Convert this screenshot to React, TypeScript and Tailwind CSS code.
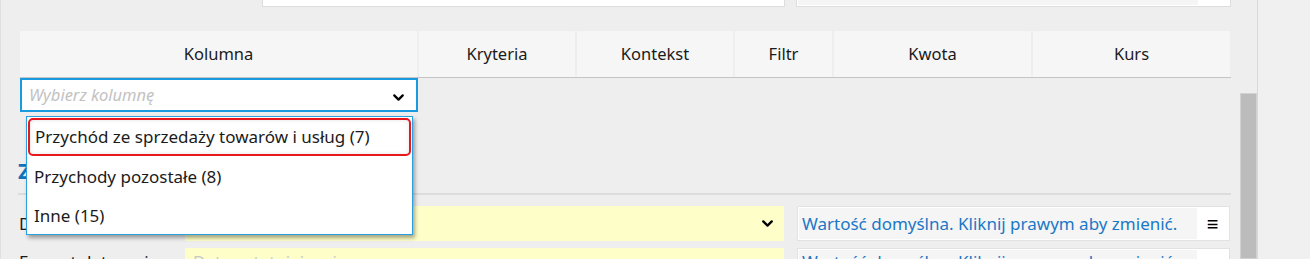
import { ChevronDown } from "lucide-react";

const columns = [
  { label: "Kolumna", w: "w-[397px]" },
  { label: "Kryteria", w: "w-[156px]" },
  { label: "Kontekst", w: "w-[156px]" },
  { label: "Filtr", w: "w-[97px]" },
  { label: "Kwota", w: "w-[197px]" },
  { label: "Kurs", w: "w-[197px]" },
];

const options = [
  "Przychód ze sprzedaży towarów i usług (7)",
  "Przychody pozostałe (8)",
  "Inne (15)",
];

function DefaultBox({ text, top }: { text: string; top?: boolean }) {
  return (
    <div className="flex h-[35px] w-[433px] border border-[#e2e2e2] bg-white p-[1px]">
      <div
        className={
          top
            ? "flex flex-1 items-start bg-[#f5f5f5] pl-[3px] pt-[1px] text-[17px] leading-[22px] text-[#1a78c6]"
            : "flex flex-1 items-center bg-[#f5f5f5] pl-[3px] text-[17px] text-[#1a78c6]"
        }
      >
        {text}
      </div>
      <div className="flex w-[31px] items-center justify-center text-[20px] font-bold leading-none text-black">≡</div>
    </div>
  );
}

export default function App() {
  return (
    <div
      className="flex h-[259px] w-[1310px] overflow-hidden bg-[#eeeeee] text-[#1b1b1b]"
      style={{ fontFamily: '"Noto Sans", "Open Sans", sans-serif' }}
    >
      {/* main panel */}
      <div className="relative w-[1237px] border-l border-[#e0e0e0]">
        {/* previous row, scrolled mostly out of view */}
        <div className="flex h-[7px] items-end">
          <div className="ml-[261px] h-[20px] w-[523px] border border-[#dedede] bg-white" />
          <div className="ml-[11px] flex h-[20px] w-[435px] border border-[#dedede] bg-white p-[1px]">
            <div className="flex-1 bg-[#f5f5f5]" />
            <div className="w-[31px]" />
          </div>
        </div>

        {/* header */}
        <div className="ml-[19px] mt-[24px] flex h-[47px] w-[1211px] gap-[2px] border-b border-[#c4c4c4]">
          {columns.map((c) => (
            <div
              key={c.label}
              className={`${c.w} flex items-center justify-center bg-[#f6f6f6] text-[16.5px] text-[#1b1b1b]`}
            >
              {c.label}
            </div>
          ))}
        </div>

        {/* column select */}
        <div className="ml-[19px] flex h-[34px] w-[398px] items-center justify-between border-2 border-[#1a9be0] bg-white pl-[7px] pr-[9px]">
          <span className="text-[16.5px] italic text-[#c2c2c2]">Wybierz kolumnę</span>
          <ChevronDown size={17} strokeWidth={3.2} className="mt-[4px] text-black" />
        </div>

        {/* section behind the dropdown */}
        <div className="ml-[17px] mt-[47px] text-[22px] font-bold leading-none text-[#1174b8]">Zakres</div>
        <div className="ml-[17px] mt-[12px] w-[1213px] border-t-2 border-[#dcdcdc]" />

        <div className="ml-[18px] mt-[11px] flex flex-col gap-[7px]">
          <div className="flex items-center">
            <span className="w-[166px] text-[17px]">Data przychodu</span>
            <div className="flex h-[35px] w-[599px] items-center justify-end bg-[#fefec8] pr-[8px]">
              <ChevronDown size={17} strokeWidth={3.2} className="text-black" />
            </div>
            <div className="ml-[13px]">
              <DefaultBox text="Wartość domyślna. Kliknij prawym aby zmienić." />
            </div>
          </div>
          <div className="flex items-start">
            <span className="w-[166px] pt-[3px] text-[17px] leading-[22px]">Format daty wpisu</span>
            <div className="flex h-[35px] w-[599px] items-start bg-[#fefec8] pl-[8px] pt-[3px] text-[17px] leading-[22px] text-[#c8c8c8]">
              Data ostatniej zmiany
            </div>
            <div className="ml-[13px]">
              <DefaultBox top text="Wartość domyślna. Kliknij prawym aby zmienić." />
            </div>
          </div>
        </div>

        {/* open dropdown list */}
        <div className="absolute left-[25px] top-[116px] w-[387px] border border-[#2aa0e0] bg-white shadow-[2px_3px_4px_rgba(0,0,0,0.35)]">
          {options.map((o, i) => (
            <div
              key={o}
              className={
                i === 0
                  ? "mx-[1px] mt-[1px] flex h-[38px] items-center rounded-[5px] border-2 border-[#e8171c] pl-[5px] text-[17px] shadow-[inset_0_0_4px_rgba(0,0,0,0.12)]"
                  : "flex h-[39px] items-center pl-[7px] pt-[2px] text-[17px]"
              }
            >
              {o}
            </div>
          ))}
        </div>
      </div>

      {/* scrollbar */}
      <div className="flex w-[20px] flex-col pl-[3px] pt-[93px]">
        <div className="flex-1 w-[17px] border border-[#d2d2d2] bg-[#bcbcbc]" />
      </div>

      {/* outer area */}
      <div className="flex-1 border-l border-[#d8d8d8] bg-[#f0f0f0]" />
    </div>
  );
}
